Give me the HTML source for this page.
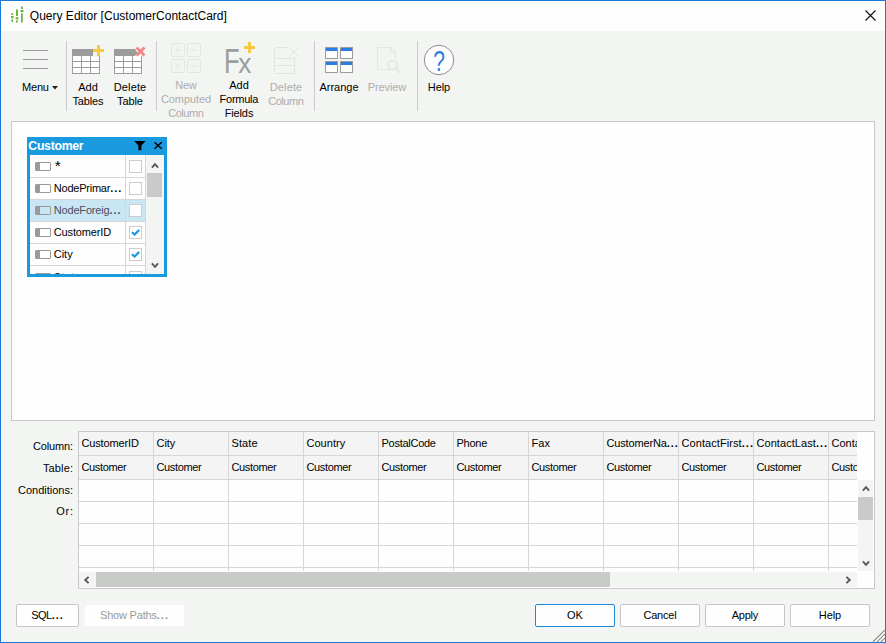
<!DOCTYPE html>
<html><head><meta charset="utf-8"><title>Query Editor</title><style>
*{margin:0;padding:0;box-sizing:border-box}
html,body{width:886px;height:643px;overflow:hidden;background:#f3f5f3}
body{position:relative;font-family:"Liberation Sans",sans-serif;font-size:11px;color:#000;line-height:14px}
.a{position:absolute}
.t{position:absolute;white-space:nowrap}
.c{position:absolute;text-align:center;white-space:nowrap}
.dis{color:#adadad}
.btn{position:absolute;height:23px;width:80px;background:#fdfefd;border:1px solid #c6c5c9;border-radius:2px;text-align:center;line-height:21px}
.sep{position:absolute;top:41px;width:1px;height:70px;background:#cbcacd}
.gl{position:absolute;background:#d6d5d8}
</style></head><body>
<div class="a" style="left:0;top:0;width:886px;height:643px;border:1px solid #1979d4"></div>
<div class="a" style="left:1px;top:1px;width:884px;height:30px;background:#fdfefd"></div>
<svg class="a" style="left:10px;top:5px" width="16" height="20" viewBox="0 0 16 20">
<g fill="#6db33f">
<rect x="1.5" y="8" width="1.6" height="2"/><rect x="1" y="11" width="2.6" height="2.2"/><rect x="1.5" y="14.2" width="1.6" height="3"/>
<rect x="6" y="4.5" width="2" height="6.5"/><rect x="5.6" y="12.2" width="2.8" height="2.2"/><rect x="6" y="15.4" width="2" height="2"/>
<rect x="11" y="1.5" width="1.8" height="2.5"/><rect x="10.4" y="5" width="3" height="2.2"/><rect x="11" y="8.5" width="1.8" height="9"/>
</g></svg>
<div class="t" style="left:29.800px;top:8px;font-size:12px;line-height:16px;letter-spacing:0.01px" id="title">Query Editor [CustomerContactCard]</div>
<svg class="a" style="left:864.500px;top:9.700px" width="11" height="11" viewBox="0 0 11 11"><path d="M0.5 0.5L10.5 10.5M10.5 0.5L0.5 10.5" stroke="#111" stroke-width="1.1" fill="none"/></svg>
<div class="sep" style="left:66px"></div>
<div class="sep" style="left:156px"></div>
<div class="sep" style="left:314px"></div>
<div class="sep" style="left:417px"></div>
<div class="a" style="left:23px;top:50px;width:25px;height:1px;background:#9a9a9a"></div>
<div class="a" style="left:23px;top:59px;width:25px;height:1px;background:#9a9a9a"></div>
<div class="a" style="left:23px;top:68px;width:25px;height:1px;background:#9a9a9a"></div>
<div class="t" style="left:22px;top:80px"><span style="letter-spacing:-0.18px">Men</span>u</div>
<svg class="a" style="left:52px;top:86px" width="6" height="4" viewBox="0 0 6 4"><path d="M0 0H6L3 3.5Z" fill="#222"/></svg>
<svg class="a" style="left:72px;top:45px" width="34" height="29" viewBox="0 0 34 29"><rect x="0.5" y="4.5" width="27" height="24" fill="#fdfefd" stroke="#9b9c9b"/><rect x="0" y="4" width="28" height="7" fill="#9b9c9b"/><path d="M9.5 11V28M18.5 11V28M1 16.5H27M1 22.5H27" stroke="#9b9c9b" fill="none"/><rect x="20" y="0" width="14" height="12" fill="#f3f5f3"/><rect x="20" y="4" width="1" height="7" fill="#9b9c9b"/><path d="M26.5 0V11M21 5.5H32" stroke="#f7c845" stroke-width="3" fill="none"/><rect x="27" y="11" width="1" height="2" fill="#9b9c9b"/></svg>
<div class="c" style="left:58px;width:60px;top:80px"><span style="letter-spacing:0.07px">Ad</span>d<br><span style="letter-spacing:-0.19px">Table</span>s</div>
<svg class="a" style="left:114px;top:45px" width="34" height="29" viewBox="0 0 34 29"><rect x="0.5" y="4.5" width="27" height="24" fill="#fdfefd" stroke="#9b9c9b"/><rect x="0" y="4" width="28" height="7" fill="#9b9c9b"/><path d="M9.5 11V28M18.5 11V28M1 16.5H27M1 22.5H27" stroke="#9b9c9b" fill="none"/><path d="M21 4L23.5 7.5L21 11H30V4Z" fill="#f3f5f3"/><path d="M22.5 2.5L30.5 10.5M30.5 2.5L22.5 10.5" stroke="#f08683" stroke-width="2.8" fill="none"/></svg>
<div class="c" style="left:100px;width:60px;top:80px"><span style="letter-spacing:0.13px">Delet</span>e<br><span style="letter-spacing:-0.10px">Tabl</span>e</div>
<svg class="a" style="left:171px;top:43px" width="30" height="30" viewBox="0 0 30 30"><rect x="0.5" y="0.5" width="13" height="13" rx="1" fill="none" stroke="#e3e5e3"/><rect x="0.5" y="16.5" width="13" height="13" rx="1" fill="none" stroke="#e3e5e3"/><rect x="16.5" y="0.5" width="13" height="13" rx="1" fill="none" stroke="#e3e5e3"/><rect x="16.5" y="16.5" width="13" height="13" rx="1" fill="none" stroke="#e3e5e3"/><path d="M3 7H11M7 3V11 M19 7H27 M4 20L10 26M10 20L4 26 M19 23H27" stroke="#e3e5e3" fill="none"/><rect x="22.5" y="19.5" width="1" height="1.5" fill="#e3e5e3"/><rect x="22.5" y="25" width="1" height="1.5" fill="#e3e5e3"/></svg>
<div class="c dis" style="left:156px;width:60px;top:78px"><span style="letter-spacing:-0.25px">Ne</span>w<br><span style="letter-spacing:-0.09px">Compute</span>d<br><span style="letter-spacing:-0.47px">Colum</span>n</div>
<svg class="a" style="left:220px;top:40px" width="40" height="36" viewBox="0 0 40 36"><g font-family="Liberation Sans, sans-serif" fill="#9c9d9c"><text transform="translate(4,32.700) scale(0.72,1)" font-size="35.500">F</text><text transform="translate(18.200,32.700) scale(0.92,1)" font-size="28.500">x</text></g><path d="M29.5 2V13M24 7.5H35" stroke="#f7c845" stroke-width="3" fill="none"/></svg>
<div class="c" style="left:209px;width:60px;top:78px"><span style="letter-spacing:0.07px">Ad</span>d<br><span style="letter-spacing:-0.25px">Formul</span>a<br><span style="letter-spacing:-0.12px">Field</span>s</div>
<svg class="a" style="left:274px;top:46px" width="26" height="29" viewBox="0 0 26 29"><path d="M14 1.5H1.5A1 1 0 0 0 0.500 2.500V26.500A1 1 0 0 0 1.500 27.500H19.500A1 1 0 0 0 20.500 26.500V11 M0.5 12.500H20.500 M0.5 19.500H20.500" stroke="#e3e5e3" fill="none"/><path d="M15.5 1.500L24.500 10.500M24.500 1.500L15.500 10.500" stroke="#e3e5e3" fill="none"/></svg>
<div class="c dis" style="left:256px;width:60px;top:80px"><span style="letter-spacing:0.13px">Delet</span>e<br><span style="letter-spacing:-0.47px">Colum</span>n</div>
<svg class="a" style="left:325px;top:47px" width="28" height="26" viewBox="0 0 28 26"><rect x="0.5" y="0.5" width="12" height="11" fill="#fdfefd" stroke="#9b9c9b"/><rect x="1" y="1" width="11" height="3" fill="#2b7de1"/><rect x="0.5" y="14.5" width="12" height="11" fill="#fdfefd" stroke="#9b9c9b"/><rect x="1" y="15" width="11" height="3" fill="#2b7de1"/><rect x="15.5" y="0.5" width="12" height="11" fill="#fdfefd" stroke="#9b9c9b"/><rect x="16" y="1" width="11" height="3" fill="#2b7de1"/><rect x="15.5" y="14.5" width="12" height="11" fill="#fdfefd" stroke="#9b9c9b"/><rect x="16" y="15" width="11" height="3" fill="#2b7de1"/></svg>
<div class="c" style="left:309px;width:60px;top:80px"><span style="letter-spacing:0.01px">Arrang</span>e</div>
<svg class="a" style="left:376px;top:46px" width="28" height="29" viewBox="0 0 28 29"><path d="M14 23.500H1.500V1.500H14.500L19.500 6.500V13 M14.500 1.500V6.500H19.500" stroke="#e3e5e3" fill="none"/><circle cx="16.500" cy="19" r="4.500" stroke="#e3e5e3" stroke-width="1.6" fill="none"/><path d="M20 22.500L24.500 27" stroke="#e3e5e3" stroke-width="2" fill="none"/></svg>
<div class="c dis" style="left:357px;width:60px;top:80px"><span style="letter-spacing:-0.11px">Previe</span>w</div>
<svg class="a" style="left:423px;top:44px" width="32" height="32" viewBox="0 0 32 32"><circle cx="16" cy="16" r="14.700" fill="#fdfefd" stroke="#8d8d8d" stroke-width="1"/><text transform="translate(16,26.800) scale(0.70,1)" text-anchor="middle" font-family="Liberation Sans, sans-serif" font-size="30" fill="#2b7de1">?</text></svg>
<div class="c" style="left:409px;width:60px;top:80px"><span style="letter-spacing:-0.08px">Hel</span>p</div>
<div class="a" style="left:11px;top:121px;width:864px;height:300px;background:#fdfefd;border:1px solid #c9c8cd"></div>
<div class="a" style="left:27px;top:137px;width:140px;height:140px;background:#1a9ade"></div>
<div class="a" style="left:30px;top:155px;width:134px;height:119px;background:#fdfefd;overflow:hidden" id="cbox">
<div class="a" style="left:5px;top:7px;width:16px;height:9px;border:1px solid #9a9a9a;border-radius:1px;background:#fdfefd"><div class="a" style="left:0;top:0;width:4px;height:7px;background:#9a9a9a"></div></div>
<div class="t" style="left:24.800px;top:3px;font-size:15.500px;line-height:16px">*</div>
<div class="a" style="left:99px;top:5px;width:13px;height:13px;border:1px solid #cbcccb;background:#fdfefd"></div>
<div class="a" style="left:5px;top:29px;width:16px;height:9px;border:1px solid #9a9a9a;border-radius:1px;background:#fdfefd"><div class="a" style="left:0;top:0;width:4px;height:7px;background:#9a9a9a"></div></div>
<div class="t" style="left:23.800px;top:26px"><span style="letter-spacing:-0.23px">NodePrimar</span><span style="letter-spacing:1.0px;font-weight:bold">...</span></div>
<div class="a" style="left:99px;top:27px;width:13px;height:13px;border:1px solid #cbcccb;background:#fdfefd"></div>
<div class="a" style="left:0;top:45px;width:116px;height:21px;background:#c9e6f5"></div>
<div class="a" style="left:5px;top:51px;width:16px;height:9px;border:1px solid #9a9a9a;border-radius:1px;background:#c9e6f5"><div class="a" style="left:0;top:0;width:4px;height:7px;background:#9a9a9a"></div></div>
<div class="t" style="left:23.800px;top:48px;color:#4d4d5c"><span style="letter-spacing:-0.18px">NodeForeig</span><span style="letter-spacing:1.0px;font-weight:bold">...</span></div>
<div class="a" style="left:99px;top:49px;width:13px;height:13px;border:1px solid #cbcccb;background:#fdfefd"></div>
<div class="a" style="left:5px;top:73px;width:16px;height:9px;border:1px solid #9a9a9a;border-radius:1px;background:#fdfefd"><div class="a" style="left:0;top:0;width:4px;height:7px;background:#9a9a9a"></div></div>
<div class="t" style="left:23.800px;top:70px"><span style="letter-spacing:-0.15px">CustomerI</span>D</div>
<div class="a" style="left:99px;top:71px;width:13px;height:13px;border:1px solid #cbcccb;background:#fdfefd"></div>
<svg class="a" style="left:99px;top:71px" width="13" height="13" viewBox="0 0 13 13"><path d="M2.900 6.200L5.600 8.600L10.200 3.900" stroke="#1a98dc" stroke-width="2.2" fill="none"/></svg>
<div class="a" style="left:5px;top:95px;width:16px;height:9px;border:1px solid #9a9a9a;border-radius:1px;background:#fdfefd"><div class="a" style="left:0;top:0;width:4px;height:7px;background:#9a9a9a"></div></div>
<div class="t" style="left:23.800px;top:92px"><span style="letter-spacing:-0.03px">Cit</span>y</div>
<div class="a" style="left:99px;top:93px;width:13px;height:13px;border:1px solid #cbcccb;background:#fdfefd"></div>
<svg class="a" style="left:99px;top:93px" width="13" height="13" viewBox="0 0 13 13"><path d="M2.900 6.200L5.600 8.600L10.200 3.900" stroke="#1a98dc" stroke-width="2.2" fill="none"/></svg>
<div class="a" style="left:5px;top:118px;width:16px;height:9px;border:1px solid #9a9a9a;border-radius:1px;background:#fdfefd"><div class="a" style="left:0;top:0;width:4px;height:7px;background:#9a9a9a"></div></div>
<div class="t" style="left:23.800px;top:115px"><span style="letter-spacing:0.11px">Stat</span>e</div>
<div class="a" style="left:99px;top:116px;width:13px;height:13px;border:1px solid #cbcccb;background:#fdfefd"></div>
<div class="gl" style="left:0;top:22px;width:116px;height:1px"></div>
<div class="gl" style="left:0;top:44px;width:116px;height:1px"></div>
<div class="gl" style="left:0;top:66px;width:116px;height:1px"></div>
<div class="gl" style="left:0;top:88px;width:116px;height:1px"></div>
<div class="gl" style="left:0;top:110px;width:116px;height:1px"></div>
<div class="gl" style="left:95px;top:0;width:1px;height:119px"></div>
<div class="gl" style="left:115px;top:0;width:1px;height:119px"></div>
<div class="a" style="left:116px;top:0;width:18px;height:119px;background:#f3f5f3"></div>
<div class="a" style="left:117px;top:18px;width:15px;height:24px;background:#c9cbc9"></div>
<svg class="a" style="left:120.6px;top:6.6px" width="8" height="7" viewBox="0 0 8 7"><path d="M0.900 5.600L4 2.200L7.100 5.600" stroke="#575757" stroke-width="1.9" fill="none"/></svg>
<svg class="a" style="left:120.5px;top:106.7px" width="8" height="7" viewBox="0 0 8 7"><path d="M0.900 1.400L4 4.800L7.100 1.400" stroke="#575757" stroke-width="1.9" fill="none"/></svg>
</div>
<div class="t" style="left:28.300px;top:139.300px;font-weight:bold;color:#fff;font-size:12.300px;letter-spacing:-0.3px" id="ctitle">Customer</div>
<svg class="a" style="left:133.500px;top:140.800px" width="12" height="10" viewBox="0 0 12 10"><path d="M0.300 0H11.600L7.400 4.400V9.200H4.400V4.400Z" fill="#000"/></svg>
<svg class="a" style="left:154px;top:141px" width="9" height="9" viewBox="0 0 9 9"><path d="M0.500 1.200L7.700 7.700M7.700 1.200L0.500 7.700" stroke="#000" stroke-width="1.5" fill="none"/></svg>
<div class="t" style="right:813px;top:439px"><span style="letter-spacing:-0.18px">Column</span>:</div>
<div class="t" style="right:813px;top:461px"><span style="letter-spacing:0.15px">Table</span>:</div>
<div class="t" style="right:813px;top:483px"><span style="letter-spacing:-0.01px">Conditions</span>:</div>
<div class="t" style="right:813px;top:504px"><span style="letter-spacing:0.78px">Or</span>:</div>
<div class="a" style="left:78px;top:431px;width:797px;height:158px;background:#fdfefd;border:1px solid #c9c8cd"></div>
<div class="a" style="left:79px;top:432px;width:778px;height:47px;background:#f3f4f3"></div>
<div class="a" style="left:79px;top:432px;width:778px;height:139px;overflow:hidden">
<div class="t" style="left:2.5px;top:4px"><span style="letter-spacing:-0.15px">CustomerI</span>D</div>
<div class="t" style="left:2.5px;top:28px"><span style="letter-spacing:-0.37px">Custome</span>r</div>
<div class="t" style="left:77.5px;top:4px"><span style="letter-spacing:-0.03px">Cit</span>y</div>
<div class="t" style="left:77.5px;top:28px"><span style="letter-spacing:-0.37px">Custome</span>r</div>
<div class="t" style="left:152.5px;top:4px"><span style="letter-spacing:0.11px">Stat</span>e</div>
<div class="t" style="left:152.5px;top:28px"><span style="letter-spacing:-0.37px">Custome</span>r</div>
<div class="t" style="left:227.5px;top:4px"><span style="letter-spacing:0.03px">Countr</span>y</div>
<div class="t" style="left:227.5px;top:28px"><span style="letter-spacing:-0.37px">Custome</span>r</div>
<div class="t" style="left:302.5px;top:4px"><span style="letter-spacing:-0.27px">PostalCod</span>e</div>
<div class="t" style="left:302.5px;top:28px"><span style="letter-spacing:-0.37px">Custome</span>r</div>
<div class="t" style="left:377.5px;top:4px"><span style="letter-spacing:-0.24px">Phon</span>e</div>
<div class="t" style="left:377.5px;top:28px"><span style="letter-spacing:-0.37px">Custome</span>r</div>
<div class="t" style="left:452.5px;top:4px"><span style="letter-spacing:0.03px">Fa</span>x</div>
<div class="t" style="left:452.5px;top:28px"><span style="letter-spacing:-0.37px">Custome</span>r</div>
<div class="t" style="left:527.5px;top:4px"><span style="letter-spacing:-0.16px">CustomerNa</span><span style="letter-spacing:1.0px;font-weight:bold">...</span></div>
<div class="t" style="left:527.5px;top:28px"><span style="letter-spacing:-0.37px">Custome</span>r</div>
<div class="t" style="left:602.5px;top:4px"><span style="letter-spacing:0.08px">ContactFirst</span><span style="letter-spacing:1.0px;font-weight:bold">...</span></div>
<div class="t" style="left:602.5px;top:28px"><span style="letter-spacing:-0.37px">Custome</span>r</div>
<div class="t" style="left:677.5px;top:4px"><span style="letter-spacing:0.06px">ContactLast</span><span style="letter-spacing:1.0px;font-weight:bold">...</span></div>
<div class="t" style="left:677.5px;top:28px"><span style="letter-spacing:-0.37px">Custome</span>r</div>
<div class="t" style="left:752.5px;top:4px">Conta</div>
<div class="t" style="left:752.5px;top:28px"><span style="letter-spacing:-0.37px">Custome</span>r</div>
<div class="gl" style="left:74px;top:0;width:1px;height:139px"></div>
<div class="gl" style="left:149px;top:0;width:1px;height:139px"></div>
<div class="gl" style="left:224px;top:0;width:1px;height:139px"></div>
<div class="gl" style="left:299px;top:0;width:1px;height:139px"></div>
<div class="gl" style="left:374px;top:0;width:1px;height:139px"></div>
<div class="gl" style="left:449px;top:0;width:1px;height:139px"></div>
<div class="gl" style="left:524px;top:0;width:1px;height:139px"></div>
<div class="gl" style="left:599px;top:0;width:1px;height:139px"></div>
<div class="gl" style="left:674px;top:0;width:1px;height:139px"></div>
<div class="gl" style="left:749px;top:0;width:1px;height:139px"></div>
<div class="gl" style="left:0;top:23px;width:778px;height:1px"></div>
<div class="gl" style="left:0;top:47px;width:778px;height:1px"></div>
<div class="gl" style="left:0;top:69px;width:778px;height:1px"></div>
<div class="gl" style="left:0;top:91px;width:778px;height:1px"></div>
<div class="gl" style="left:0;top:113px;width:778px;height:1px"></div>
<div class="gl" style="left:0;top:135px;width:778px;height:1px"></div>
</div>
<div class="a" style="left:858px;top:480px;width:15px;height:91px;background:#f3f5f3"></div>
<div class="a" style="left:858px;top:497px;width:15px;height:23px;background:#c9cbc9"></div>
<svg class="a" style="left:861.5px;top:485.3px" width="8" height="7" viewBox="0 0 8 7"><path d="M0.900 5.600L4 2.200L7.100 5.600" stroke="#575757" stroke-width="1.9" fill="none"/></svg>
<svg class="a" style="left:861.5px;top:559.6px" width="8" height="7" viewBox="0 0 8 7"><path d="M0.900 1.400L4 4.800L7.100 1.400" stroke="#575757" stroke-width="1.9" fill="none"/></svg>
<div class="a" style="left:79px;top:572px;width:778px;height:15px;background:#f3f5f3"></div>
<div class="a" style="left:96px;top:572px;width:514px;height:15px;background:#c9cbc9"></div>
<svg class="a" style="left:83.4px;top:575.5px" width="7" height="8" viewBox="0 0 7 8"><path d="M5.600 0.900L2.200 4L5.600 7.100" stroke="#575757" stroke-width="1.9" fill="none"/></svg>
<svg class="a" style="left:845.4px;top:575.7px" width="7" height="8" viewBox="0 0 7 8"><path d="M1.400 0.900L4.800 4L1.400 7.100" stroke="#575757" stroke-width="1.9" fill="none"/></svg>
<div class="btn" style="left:16px;top:604px;width:63px"><span style="letter-spacing:-0.52px">SQL</span><span style="letter-spacing:1.0px;font-weight:bold">...</span></div>
<div class="a dis" style="left:85px;top:605px;width:99px;height:21px;background:#fdfefd;text-align:center;line-height:20px;color:#9a9a9a"><span style="letter-spacing:-0.19px">Show Paths</span><span style="letter-spacing:1.0px;font-weight:bold">...</span></div>
<div class="btn" style="left:535px;top:604px;border-color:#1c8ad8">OK</div>
<div class="btn" style="left:620px;top:604px"><span style="letter-spacing:-0.22px">Cance</span>l</div>
<div class="btn" style="left:705px;top:604px"><span style="letter-spacing:-0.28px">Appl</span>y</div>
<div class="btn" style="left:790px;top:604px"><span style="letter-spacing:-0.08px">Hel</span>p</div>
<svg class="a" style="left:873px;top:630px" width="12" height="12" viewBox="1 1 12 12"><path d="M1 13L13 1M5 13L13 5M9 13L13 9" stroke="#8f8d8b" stroke-width="1.3" fill="none"/><path d="M3 13L13 3M7 13L13 7M11 13L13 11" stroke="#fff" stroke-width="1.2" fill="none"/></svg>
</body></html>
